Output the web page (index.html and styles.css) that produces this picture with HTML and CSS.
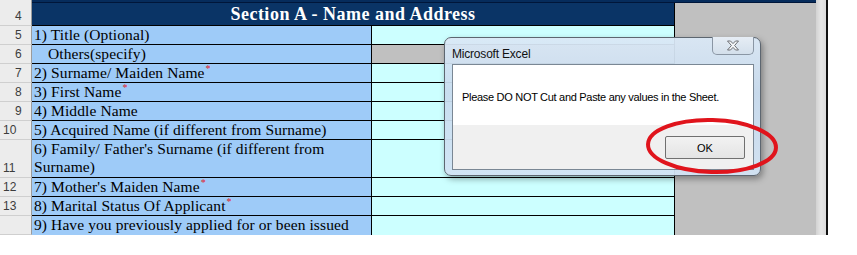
FILE: index.html
```html
<!DOCTYPE html>
<html>
<head>
<meta charset="utf-8">
<link rel="stylesheet" href="styles.css">
</head>
<body>
<div class="screen">
  <div class="sheet">
    <div class="rh rh-top"></div>
    <div class="top-band"></div>
    <div class="strip"></div>
    <div class="vline"></div>

    <div class="rh one">4</div>
    <div class="head">Section A - Name and Address</div>
    <div class="side"></div>

    <div class="rh one">5</div>
    <div class="lab">1) Title (Optional)</div>
    <div class="val"></div>

    <div class="rh one">6</div>
    <div class="lab indent">Others(specify)</div>
    <div class="val gray"></div>

    <div class="rh one">7</div>
    <div class="lab">2) Surname/ Maiden Name<span class="req">*</span></div>
    <div class="val"></div>

    <div class="rh one">8</div>
    <div class="lab">3) First Name<span class="req">*</span></div>
    <div class="val"></div>

    <div class="rh one">9</div>
    <div class="lab">4) Middle Name</div>
    <div class="val"></div>

    <div class="rh two">10</div>
    <div class="lab">5) Acquired Name (if different from Surname)</div>
    <div class="val"></div>

    <div class="rh two">11</div>
    <div class="lab">6) Family/ Father's Surname (if different from<br>Surname)</div>
    <div class="val"></div>

    <div class="rh two">12</div>
    <div class="lab">7) Mother's Maiden Name<span class="req">*</span></div>
    <div class="val"></div>

    <div class="rh two">13</div>
    <div class="lab">8) Marital Status Of Applicant<span class="req">*</span></div>
    <div class="val"></div>

    <div class="rh two"></div>
    <div class="lab last">9) Have you previously applied for or been issued</div>
    <div class="val last"></div>
  </div>

  <div class="dialog">
    <div class="titlebar">
      <span class="title">Microsoft Excel</span>
      <div class="close">
        <svg width="14" height="11" viewBox="0 0 14 11">
          <path d="M1.5 1 H4.5 L7 3.6 L9.5 1 H12.5 L8.6 5.5 L12.5 10 H9.5 L7 7.4 L4.5 10 H1.5 L5.4 5.5 Z" fill="#f4f6f8" stroke="#6c6f74" stroke-width="1"/>
        </svg>
      </div>
    </div>
    <div class="client">
      <div class="msg">Please DO NOT Cut and Paste any values in the Sheet.</div>
      <div class="foot">
        <div class="btn">OK</div>
      </div>
    </div>
  </div>

  <svg class="circle" width="140" height="62" viewBox="0 0 140 62">
    <ellipse cx="70" cy="31" rx="64" ry="26" fill="none" stroke="#e0141c" stroke-width="4" transform="rotate(1.5 70 31)"/>
  </svg>
</div>
</body>
</html>
```

FILE: styles.css
```css
html, body {
  margin: 0;
  padding: 0;
  background: #ffffff;
}

.screen {
  position: relative;
  width: 857px;
  height: 255px;
  overflow: hidden;
}

.sheet {
  display: grid;
  grid-template-columns: 32px 340px 303px 141px 10px 2px;
  grid-template-rows: 3px 23px 19px 19px 19px 19px 19px 19px 38px 19px 19px 19px;
  width: 847px;
}

.rh {
  grid-column: 1;
  background: #ececec;
  border-right: 1px solid #9b9b9b;
  border-bottom: 1px solid #cfcfcf;
  box-sizing: border-box;
  font-family: "Liberation Sans", Arial, sans-serif;
  font-size: 12px;
  color: #3c3c3c;
  display: flex;
  align-items: flex-end;
  padding-bottom: 2px;
  line-height: 14px;
}
.rh.one { padding-left: 15px; }
.rh.two { padding-left: 3px; }
.rh-top { border-bottom: none; }

.top-band {
  grid-column: 2 / 5;
  background: #062c5c;
  border-bottom: 1px solid #00163a;
  box-sizing: border-box;
}

.strip {
  grid-column: 5;
  grid-row: 1 / -1;
  background: linear-gradient(to right, #d2d2d2, #e6e6e6 50%, #dcdcdc);
}

.vline {
  grid-column: 6;
  grid-row: 1 / -1;
  background: #111;
}

.head {
  grid-column: 2 / 4;
  background: #0a3466;
  border-right: 1px solid #000;
  border-bottom: 1px solid #000;
  box-sizing: border-box;
  color: #ffffff;
  font-family: "Liberation Serif", "Times New Roman", serif;
  font-weight: bold;
  font-size: 18px;
  letter-spacing: 0.5px;
  text-align: center;
  line-height: 22px;
  white-space: nowrap;
}

.side {
  grid-column: 4;
  grid-row: 2 / -1;
  background: #c0c0c0;
}

.lab {
  grid-column: 2;
  background: #9ecbf8;
  border-right: 1px solid #000;
  border-bottom: 1px solid #000;
  box-sizing: border-box;
  font-family: "Liberation Serif", "Times New Roman", serif;
  font-size: 15.5px;
  letter-spacing: 0.1px;
  color: #000;
  line-height: 18px;
  padding-left: 2px;
  white-space: nowrap;
  overflow: hidden;
}
.lab.indent { padding-left: 16px; }
.lab.last { border-bottom: none; }

.req {
  color: #e0202a;
  font-size: 10px;
  line-height: 10px;
  position: relative;
  top: -6px;
  margin-left: 1px;
}

.val {
  grid-column: 3;
  background: #ccffff;
  border-right: 1px solid #000;
  border-bottom: 1px solid #000;
  box-sizing: border-box;
}
.val.gray { background: #c0c0c0; }
.val.last { border-bottom: none; }

/* dialog */
.dialog {
  position: absolute;
  left: 444px;
  top: 37px;
  width: 317px;
  height: 139px;
  box-sizing: border-box;
  border: 1px solid #5d6670;
  border-radius: 7px;
  background: linear-gradient(to bottom, rgba(218,232,246,0.94), rgba(200,219,238,0.94) 40%, rgba(210,227,244,0.94));
  box-shadow: 2px 3px 6px rgba(0,0,0,0.35);
  padding: 0 6px 5px 7px;
  display: flex;
  flex-direction: column;
}

.titlebar {
  height: 26px;
  display: flex;
  justify-content: space-between;
  align-items: flex-start;
}

.title {
  font-family: "Liberation Sans", Arial, sans-serif;
  font-size: 12px;
  color: #111;
  margin-top: 9px;
  letter-spacing: -0.2px;
}

.close {
  width: 42px;
  height: 18px;
  margin-top: -1px;
  box-sizing: border-box;
  border: 1px solid #8a96a4;
  border-top: none;
  border-radius: 0 0 5px 5px;
  background: linear-gradient(to bottom, #e6edf5, #d3dfeb);
  display: flex;
  align-items: center;
  justify-content: center;
}

.client {
  flex: 1;
  border: 1px solid #7a8794;
  background: #f0f0f0;
  display: flex;
  flex-direction: column;
}

.msg {
  background: #ffffff;
  height: 60px;
  box-sizing: border-box;
  padding: 26px 0 0 9px;
  font-family: "Liberation Sans", Arial, sans-serif;
  font-size: 11px;
  color: #000;
  letter-spacing: -0.3px;
}

.foot {
  flex: 1;
  display: flex;
  justify-content: flex-end;
  padding: 11px 8px 0 0;
}

.btn {
  width: 80px;
  height: 23px;
  box-sizing: border-box;
  border: 1px solid #707070;
  border-radius: 2px;
  background: linear-gradient(to bottom, #f2f2f2, #e4e4e4);
  font-family: "Liberation Sans", Arial, sans-serif;
  font-size: 11px;
  color: #000;
  display: flex;
  align-items: center;
  justify-content: center;
}

.circle {
  position: absolute;
  left: 642px;
  top: 115px;
}
```
